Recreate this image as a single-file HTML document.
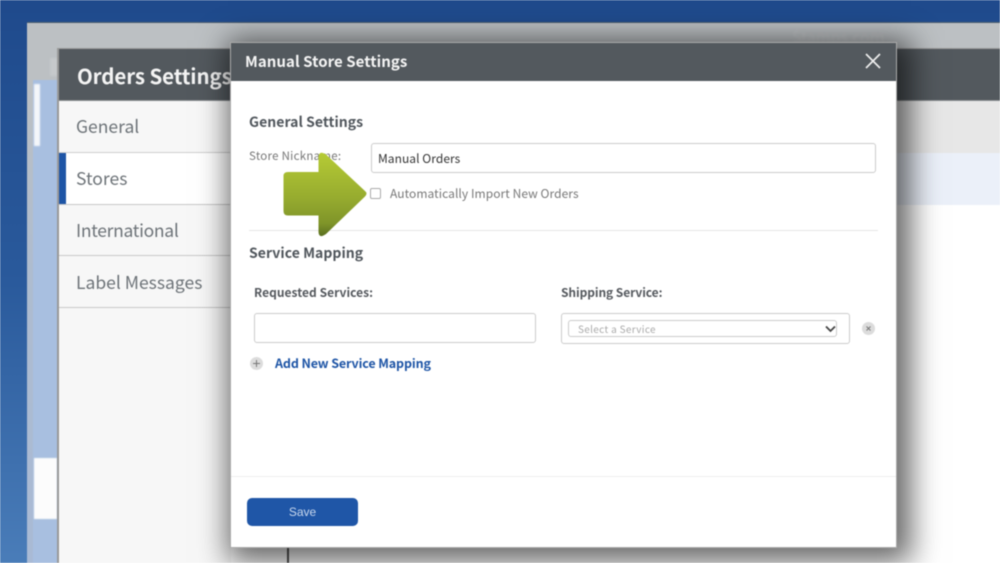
<!DOCTYPE html>
<html><head><meta charset="utf-8">
<style>
html,body{margin:0;padding:0}
body{width:1000px;height:563px;overflow:hidden;position:relative;background:#fff;font-family:"Noto Sans CJK JP","Liberation Sans",sans-serif}
#all{position:absolute;left:0;top:0;width:1000px;height:563px;overflow:hidden;filter:blur(.5px);background:linear-gradient(180deg,#1f4a8c 0%,#2a5a9c 50%,#4a7db9 100%)}
.a{position:absolute;white-space:nowrap}
</style></head><body>
<div id="all">
<!-- back window -->
<div class="a" style="left:27px;top:22px;width:973px;height:541px;background:#bcc0c3;border-top:1px solid #50606f;box-sizing:border-box"></div>
<div class="a" style="left:27px;top:80px;width:6px;height:483px;background:linear-gradient(180deg,#bcc0c3,#aebccf 40%,#a9bad5)"></div>
<div class="a" style="left:33px;top:80px;width:24px;height:483px;background:#a8bfe0"></div>
<div class="a" style="left:34px;top:84px;width:6px;height:62px;background:#f4f6fa;filter:blur(.8px)"></div>
<div class="a" style="left:34px;top:458px;width:23px;height:61px;background:#fcfcfc;filter:blur(.5px)"></div>
<div class="a" style="left:50px;top:58px;width:8px;height:18px;background:#c6c9cb;filter:blur(1px)"></div>
<div class="a" style="left:792px;top:24px;font-size:16px;color:#c6c9cb;filter:blur(1.2px)">Stamps.com</div>
<!-- settings panel -->
<div class="a" style="left:57px;top:48px;width:943px;height:515px;background:#fff;border-left:2px solid #999;border-top:1px solid #999;box-sizing:border-box"></div>
<div class="a" style="left:59px;top:49px;width:941px;height:52px;background:#53595e;border-bottom:1px solid #8b8f92;box-sizing:border-box"></div>
<div class="a" style="left:77px;top:60px;font-size:20.5px;line-height:30px;font-weight:700;color:#f4f4f4;letter-spacing:-.1px">Orders Settings</div>
<div class="a" style="left:59px;top:101px;width:172px;height:462px;background:#f7f7f7"></div>
<div class="a" style="left:59px;top:152px;width:172px;height:2px;background:#cfcfcf"></div>
<div class="a" style="left:59px;top:153px;width:172px;height:51px;background:#fff"></div>
<div class="a" style="left:59px;top:153px;width:7px;height:51px;background:#1e55a6"></div>
<div class="a" style="left:59px;top:204px;width:172px;height:1px;background:#c8c8c8"></div>
<div class="a" style="left:59px;top:255px;width:172px;height:1px;background:#c8c8c8"></div>
<div class="a" style="left:59px;top:307px;width:172px;height:1px;background:#c8c8c8"></div>
<div class="a" style="left:76px;top:113px;font-size:17.5px;line-height:28px;color:#6d7378">General</div>
<div class="a" style="left:76px;top:165px;font-size:17.5px;line-height:28px;color:#6d7378">Stores</div>
<div class="a" style="left:76px;top:217px;font-size:17.5px;line-height:28px;color:#6d7378;letter-spacing:-.3px">International</div>
<div class="a" style="left:76px;top:269px;font-size:17.5px;line-height:28px;color:#6d7378">Label Messages</div>
<!-- right side rows -->
<div class="a" style="left:897px;top:101px;width:103px;height:52px;background:#e7e7e7"></div>
<div class="a" style="left:897px;top:153px;width:103px;height:52px;background:#ebf0f9"></div>
<div class="a" style="left:897px;top:205px;width:103px;height:358px;background:#fff"></div>
<div class="a" style="left:287px;top:547px;width:2px;height:16px;background:#555"></div>
<!-- modal -->
<div class="a" style="left:230px;top:42px;width:667px;height:506px;background:#fff;border:1px solid #aaa;box-sizing:border-box;box-shadow:6px 6px 28px 8px rgba(0,0,0,.6)"></div>
<div class="a" style="left:231px;top:43px;width:665px;height:38px;background:#53595e"></div>
<div class="a" style="left:245px;top:51px;font-size:15px;line-height:22px;font-weight:700;color:#f4f4f4;letter-spacing:.05px">Manual Store Settings</div>
<svg class="a" style="left:865px;top:53px" width="16" height="16" viewBox="0 0 16 16"><path d="M1 1L15 15M15 1L1 15" stroke="#eee" stroke-width="1.7" fill="none"/></svg>
<div class="a" style="left:249px;top:112px;font-size:14px;line-height:20px;font-weight:700;color:#50565c;letter-spacing:.04px">General Settings</div>
<div class="a" style="left:249px;top:147px;font-size:11.5px;line-height:18px;color:#777;letter-spacing:.27px">Store Nickname:</div>
<div class="a" style="left:371px;top:143px;width:505px;height:30px;border:1px solid #ccc;border-radius:3px;box-sizing:border-box;background:#fff"></div>
<div class="a" style="left:378px;top:150px;font-size:12px;line-height:18px;color:#333;letter-spacing:.05px">Manual Orders</div>
<div class="a" style="left:370px;top:188px;width:11px;height:11px;border:1px solid #aaa;border-radius:2px;box-sizing:border-box;background:#fff"></div>
<div class="a" style="left:390px;top:185px;font-size:12px;line-height:18px;color:#777;letter-spacing:.06px">Automatically Import New Orders</div>
<div class="a" style="left:249px;top:230px;width:629px;height:1px;background:#e6e6e6"></div>
<div class="a" style="left:249px;top:243px;font-size:14px;line-height:20px;font-weight:700;color:#50565c;letter-spacing:.04px">Service Mapping</div>
<div class="a" style="left:254px;top:284px;font-size:12px;line-height:18px;font-weight:700;color:#55595e;letter-spacing:.03px">Requested Services:</div>
<div class="a" style="left:561px;top:284px;font-size:12px;line-height:18px;font-weight:700;color:#55595e;letter-spacing:-.08px">Shipping Service:</div>
<div class="a" style="left:254px;top:313px;width:282px;height:30px;border:1px solid #ccc;border-radius:3px;box-sizing:border-box"></div>
<div class="a" style="left:561px;top:313px;width:289px;height:31px;border:1px solid #ccc;border-radius:3px;box-sizing:border-box"></div>
<div class="a" style="left:568px;top:320px;width:269px;height:17px;border:1px solid #ccc;border-radius:3px;box-sizing:border-box"></div>
<div class="a" style="left:578px;top:320px;font-size:10px;line-height:17px;color:#aaa;letter-spacing:.32px">Select a Service</div>
<svg class="a" style="left:825px;top:325px" width="11" height="8" viewBox="0 0 11 8"><path d="M1 1.500L5.500 6L10 1.500" stroke="#444" stroke-width="1.800" fill="none"/></svg>
<svg class="a" style="left:862px;top:322px" width="13" height="13" viewBox="0 0 13 13"><circle cx="6.500" cy="6.500" r="6.500" fill="#dcdcdc"/><path d="M4.500 4.500L8.500 8.500M8.500 4.500L4.500 8.500" stroke="#777" stroke-width="1"/></svg>
<svg class="a" style="left:250px;top:357px" width="13" height="13" viewBox="0 0 13 13"><circle cx="6.500" cy="6.500" r="6.500" fill="#dcdcdc"/><path d="M6.500 3v7M3 6.500h7" stroke="#777" stroke-width="1"/></svg>
<div class="a" style="left:275px;top:354px;font-size:12.5px;line-height:18px;font-weight:700;color:#1e55a6;letter-spacing:-.12px">Add New Service Mapping</div>
<div class="a" style="left:231px;top:476px;width:665px;height:1px;background:#eee"></div>
<div class="a" style="left:247px;top:498px;width:111px;height:28px;background:#1f56a7;border-radius:5px"></div>
<div class="a" style="left:247px;top:498px;width:111px;text-align:center;font-family:'Liberation Sans',sans-serif;font-size:12px;line-height:28px;color:#c9d8ee">Save</div>
<!-- arrow -->
<svg class="a" style="left:280px;top:148px" width="92" height="92" viewBox="0 0 92 92">
<defs><linearGradient id="g" x1="0" y1="0" x2="0" y2="1"><stop offset="0" stop-color="#b6cb35"/><stop offset=".55" stop-color="#96ab2f"/><stop offset=".85" stop-color="#7f9429"/><stop offset="1" stop-color="#5a6f20"/></linearGradient></defs>
<path d="M38.500 9Q39 2 46 6.500L85 43Q88 45.500 85 48.500L46 86Q39 91 38.500 84L38.500 67.500L8 67.500Q3.500 67.500 3.500 63L3.500 28Q3.500 24 8 24L38.500 24Z" fill="url(#g)"/>
</svg>
</div>
</body></html>
